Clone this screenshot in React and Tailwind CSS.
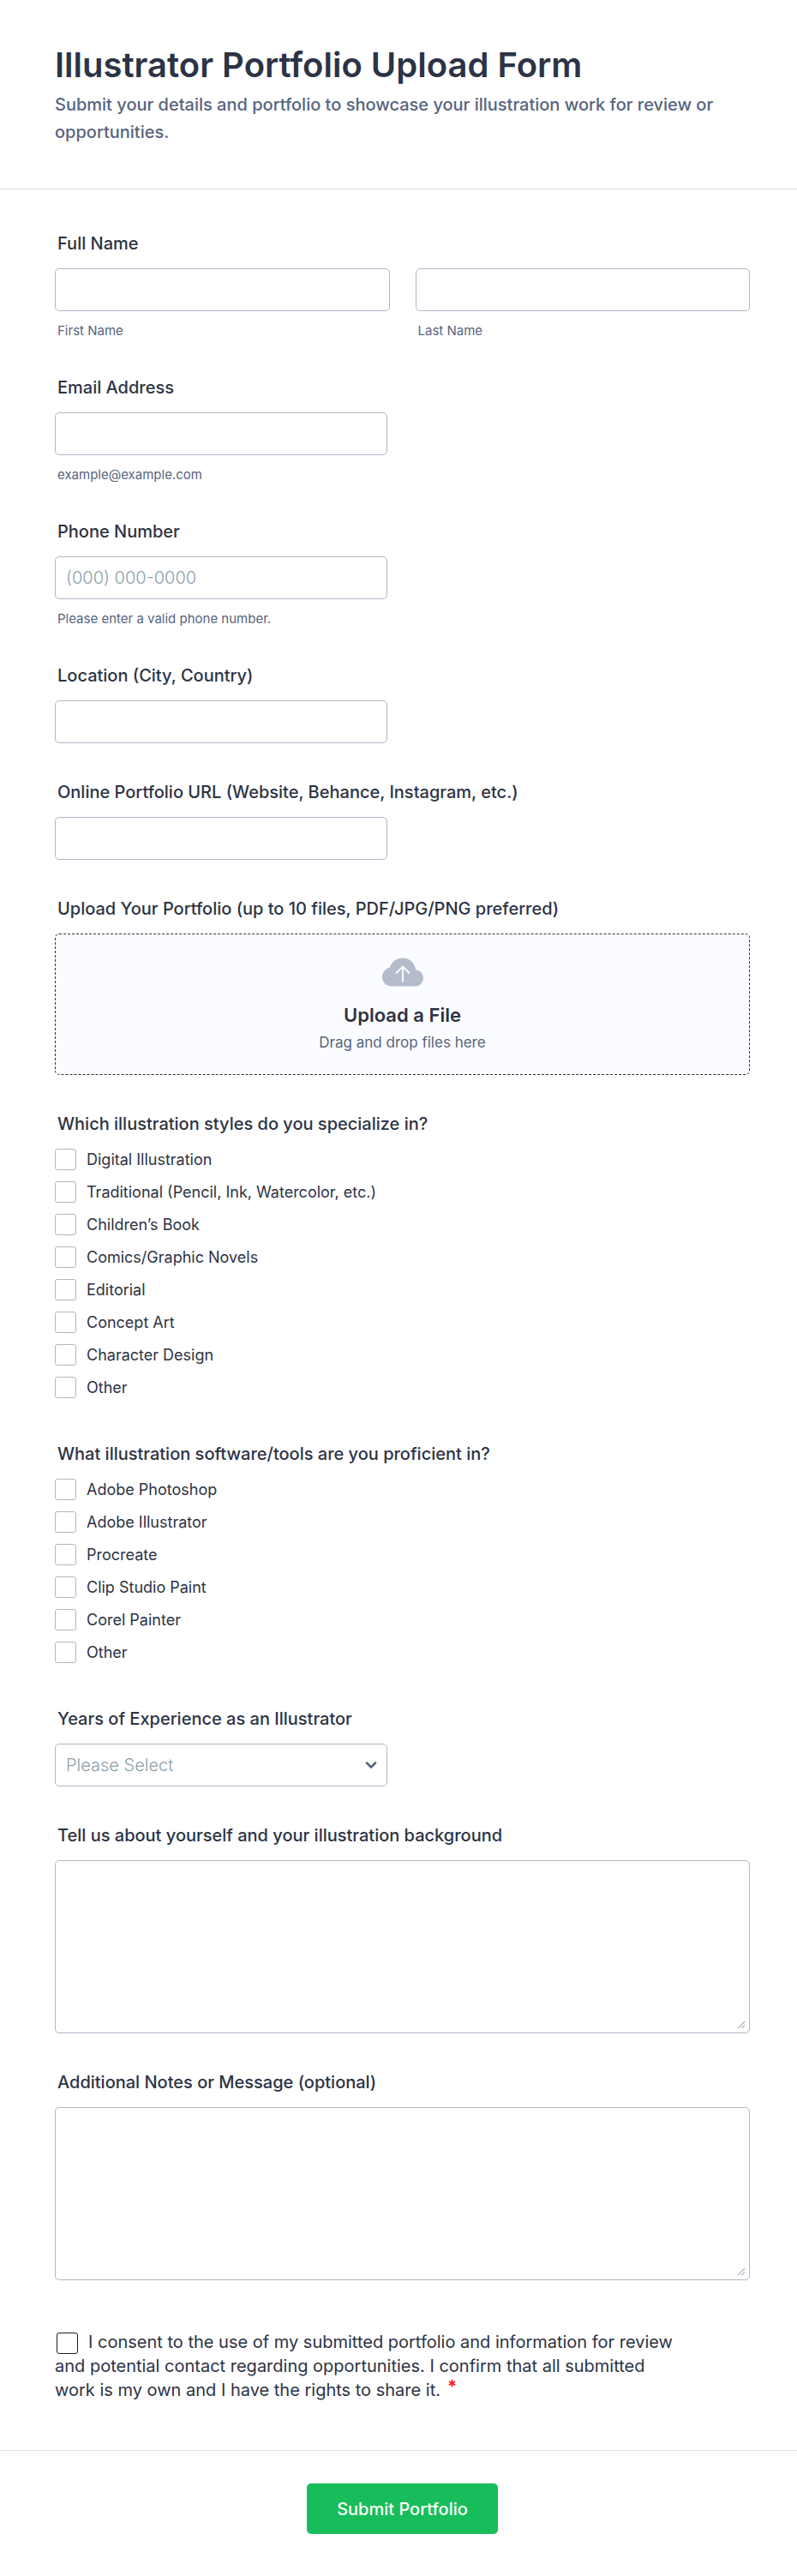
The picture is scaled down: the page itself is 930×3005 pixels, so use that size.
import React from "react";

const styleOptions = [
  "Digital Illustration",
  "Traditional (Pencil, Ink, Watercolor, etc.)",
  "Children’s Book",
  "Comics/Graphic Novels",
  "Editorial",
  "Concept Art",
  "Character Design",
  "Other",
];

const toolOptions = [
  "Adobe Photoshop",
  "Adobe Illustrator",
  "Procreate",
  "Clip Studio Paint",
  "Corel Painter",
  "Other",
];

const labelClass = "block pl-[3px] mb-4 text-[20px] leading-[26px] font-medium text-[#2c3345]";
const hintClass = "block pl-[3px] mt-[14px] text-[15px] leading-[18px] text-[#57647e]";
const inputClass =
  "block w-full h-[50px] px-3 rounded-[5px] border border-[#b0b6c6] bg-white text-[20px] font-light text-[#2c3345] placeholder:text-[#8c9fab] outline-none focus:border-blue-500";

const TextField = ({ id, label, hint, type = "text", placeholder }) => (
  <div>
    <label htmlFor={id} className={labelClass}>{label}</label>
    <div className="max-w-[388px]">
      <input id={id} type={type} placeholder={placeholder} className={inputClass} />
      {hint && <span className={hintClass}>{hint}</span>}
    </div>
  </div>
);

const CheckboxGroup = ({ name, label, options }) => (
  <fieldset className="pb-2">
    <legend className={labelClass}>{label}</legend>
    <div className="flex flex-col gap-[13px]">
      {options.map((option) => (
        <label key={option} className="flex items-center gap-3 text-[18px] leading-[25px] text-[#2c3345] cursor-pointer">
          <input
            type="checkbox"
            name={name}
            value={option}
            className="appearance-none size-[25px] shrink-0 rounded-[3px] border border-[#b0b6c6] bg-white checked:bg-blue-500"
          />
          {option}
        </label>
      ))}
    </div>
  </fieldset>
);

const TextArea = ({ id, label }) => (
  <div>
    <label htmlFor={id} className={labelClass}>{label}</label>
    <div className="relative">
      <textarea id={id} className="block w-full h-[202px] p-3 rounded-[5px] border border-[#b0b6c6] bg-white text-[20px] font-light text-[#2c3345] resize-none outline-none focus:border-blue-500" />
      {/* Resize grip */}
      <svg className="absolute right-[5px] bottom-[5px] size-[10px] pointer-events-none" viewBox="0 0 10 10" fill="none" stroke="#b8bdc9" strokeWidth="1.5" aria-hidden="true">
        <path d="M1 9L9 1M5.5 9L9 5.5" />
      </svg>
    </div>
  </div>
);

const App = () => {
  return (
    <form className="bg-white font-[Inter,sans-serif] text-[#2c3345]" onSubmit={(e) => e.preventDefault()}>
      {/* Header */}
      <header className="pl-16 pr-[55px] pt-[52px] pb-[50px] border-b border-[#d7d8e1]">
        <h1 className="text-[40px] leading-[48px] font-semibold">Illustrator Portfolio Upload Form</h1>
        <p className="mt-[6px] text-[20px] leading-8 font-medium text-[#57647e]">
          Submit your details and portfolio to showcase your illustration work for review or opportunities.
        </p>
      </header>

      {/* Fields */}
      <div className="flex flex-col gap-11 pl-16 pr-[55px] pt-[50px] pb-14">
        <fieldset>
          <legend className={labelClass}>Full Name</legend>
          <div className="grid grid-cols-2 gap-[30px]">
            <label>
              <input type="text" className={inputClass} />
              <span className={hintClass}>First Name</span>
            </label>
            <label>
              <input type="text" className={inputClass} />
              <span className={hintClass}>Last Name</span>
            </label>
          </div>
        </fieldset>

        <TextField id="email" label="Email Address" type="email" hint="example@example.com" />
        <TextField id="phone" label="Phone Number" type="tel" placeholder="(000) 000-0000" hint="Please enter a valid phone number." />
        <TextField id="location" label="Location (City, Country)" />
        <TextField id="portfolio-url" label="Online Portfolio URL (Website, Behance, Instagram, etc.)" type="url" />

        {/* Upload */}
        <div>
          <label htmlFor="upload" className={labelClass}>Upload Your Portfolio (up to 10 files, PDF/JPG/PNG preferred)</label>
          <button
            id="upload"
            type="button"
            className="flex w-full h-[165px] flex-col items-center rounded-[5px] border border-dashed border-[#2c3345] bg-[#fbfcff] pt-[27px] cursor-pointer"
          >
            <svg className="w-12 h-[34px]" viewBox="0 0 48 34" aria-hidden="true">
              <path fill="#b4bccc" d="M11 33.5C4.5 33.5 0 28.8 0 23C0 17.5 3.8 12.8 9 11.6C11 5 17 .5 24 .5C31.5 .5 38 6 39.2 14.3C44 15 48 18.8 48 24C48 29.3 43.8 33.5 38.5 33.5Z" />
              <path fill="none" stroke="#fff" strokeWidth="1.8" d="M24 28.5V10.500M16 18.500L24 10.500L32 18.500" />
            </svg>
            <span className="mt-5 text-[22px] leading-[26px] font-semibold">Upload a File</span>
            <span className="mt-[6px] text-[17px] leading-[26px] text-[#57647e]">Drag and drop files here</span>
          </button>
        </div>

        <CheckboxGroup name="styles" label="Which illustration styles do you specialize in?" options={styleOptions} />
        <CheckboxGroup name="tools" label="What illustration software/tools are you proficient in?" options={toolOptions} />

        <div>
          <label htmlFor="experience" className={labelClass}>Years of Experience as an Illustrator</label>
          <div className="relative max-w-[388px]">
            <select id="experience" defaultValue="" className="appearance-none block w-full h-[50px] px-3 rounded-[5px] border border-[#b0b6c6] bg-white text-[20px] font-light text-[#8c9fab] outline-none focus:border-blue-500">
              <option value="">Please Select</option>
              <option>0-2 years</option>
              <option>3-5 years</option>
              <option>6+ years</option>
            </select>
            <svg className="absolute right-3 top-[21px] w-[14px] h-[9px] pointer-events-none" viewBox="0 0 14 9" fill="none" stroke="#57647e" strokeWidth="2.5" aria-hidden="true">
              <path d="M2 1.5L7 6.5L12 1.5" strokeLinecap="round" strokeLinejoin="round" />
            </svg>
          </div>
        </div>

        <TextArea id="about" label="Tell us about yourself and your illustration background" />
        <TextArea id="notes" label="Additional Notes or Message (optional)" />

        {/* Consent */}
        <label className="block max-w-[730px] pt-[14px] text-[20px] leading-7">
          <input
            type="checkbox"
            required
            className="appearance-none size-[25px] ml-[2px] mr-3 align-middle rounded-[3px] border border-[#1a1d2b] bg-white checked:bg-blue-500"
          />
          I consent to the use of my submitted portfolio and information for review and potential contact regarding
          opportunities. I confirm that all submitted work is my own and I have the rights to share it.
          <span className="inline-block ml-2 align-top leading-5 font-bold text-[#ff1a1a]">*</span>
        </label>
      </div>

      {/* Submit */}
      <footer className="flex justify-center border-t border-[#e3e5f5] pl-16 pr-[55px] pt-[38px] pb-[49px]">
        <button type="submit" className="h-[59px] px-[35px] rounded-[5px] bg-[#18bd5b] text-[20px] font-medium text-white cursor-pointer">
          Submit Portfolio
        </button>
      </footer>
    </form>
  );
};

export default App;
